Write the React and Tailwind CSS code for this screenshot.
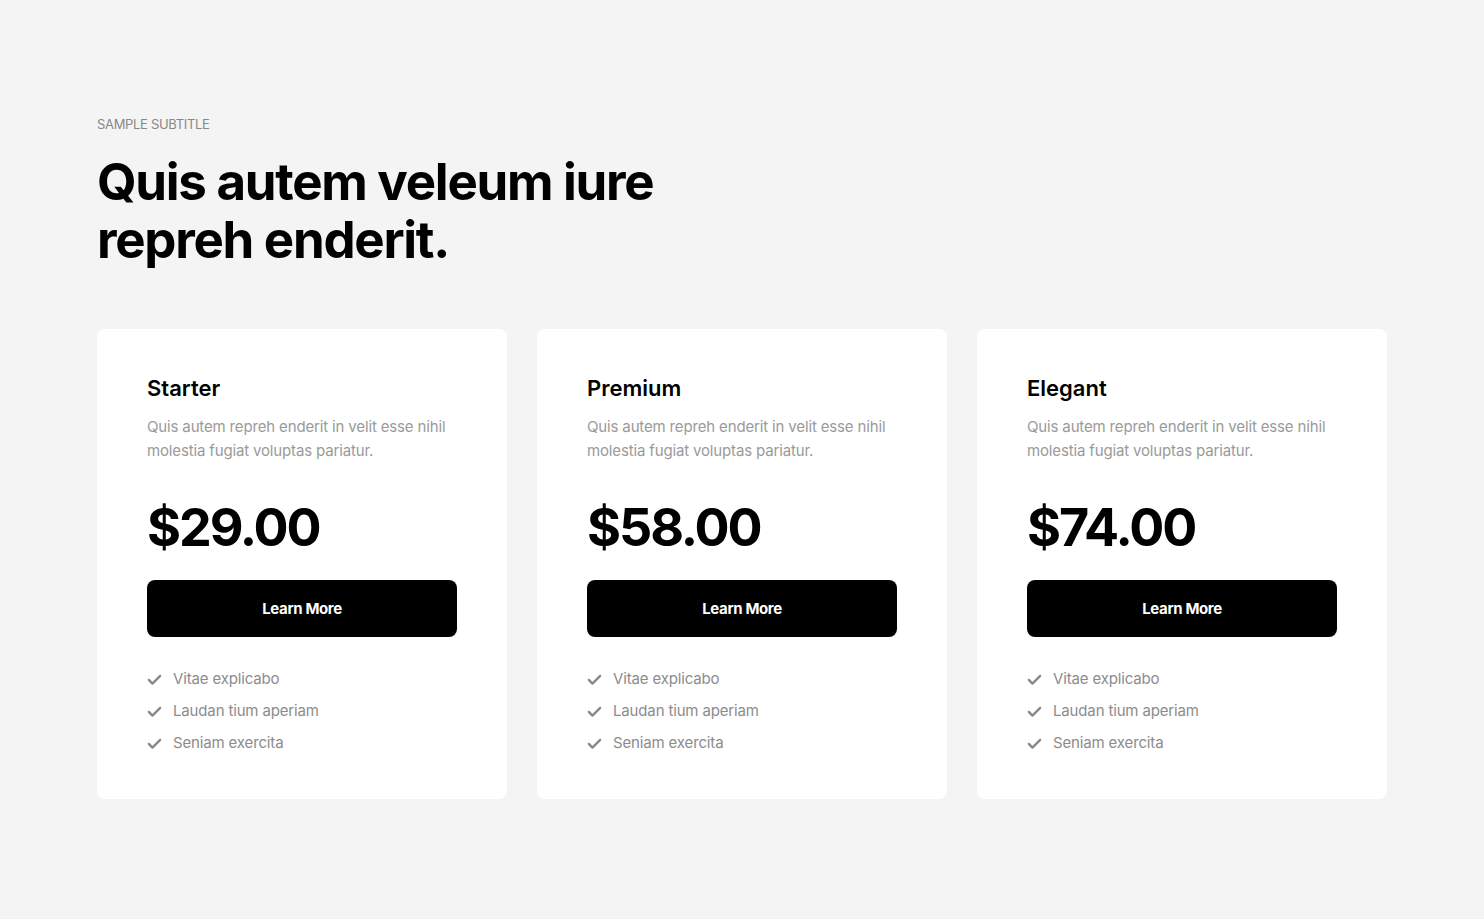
const plans = [
  { name: 'Starter', price: '$29.00' },
  { name: 'Premium', price: '$58.00' },
  { name: 'Elegant', price: '$74.00' },
];

const features = ['Vitae explicabo', 'Laudan tium aperiam', 'Seniam exercita'];

function Check() {
  return (
    <svg viewBox="0 0 16 16" className="w-[15px] h-[15px] shrink-0" fill="none">
      <path d="M2 8.5l3.8 3.8L14 4.2" stroke="#8a8a8a" strokeWidth="2.6" strokeLinecap="round" strokeLinejoin="round" />
    </svg>
  );
}

function PlanCard({ name, price }) {
  return (
    <div className="bg-white rounded-lg px-[50px] pt-[44px] pb-[44px]">
      <h3 className="text-[22px] leading-[30px] font-semibold text-black">{name}</h3>
      <p className="mt-[12px] text-[15px] leading-[24px] text-[#9a9a9a] tracking-[-0.01em]">
        Quis autem repreh enderit in velit esse nihil molestia fugiat voluptas pariatur.
      </p>
      <div className="mt-[39px] text-[52px] leading-none font-bold text-black tracking-[-0.04em]">{price}</div>
      <button type="button" className="mt-[26px] w-full h-[57px] bg-black rounded-lg text-white text-[15px] font-bold tracking-tight pt-px">
        Learn More
      </button>
      <ul className="mt-[30px] flex flex-col gap-2">
        {features.map((f) => (
          <li key={f} className="flex items-center gap-[11px] text-[15px] leading-[24px] text-[#8c8c8c] tracking-[-0.01em]">
            <Check />
            {f}
          </li>
        ))}
      </ul>
    </div>
  );
}

export default function App() {
  return (
    <div className="min-h-screen bg-[#f4f4f4] font-['Inter',sans-serif]">
      <div className="w-[1290px] ml-[97px] pt-[114px]">
        <p className="text-[13px] leading-[20px] uppercase text-[#888] tracking-tight">Sample Subtitle</p>
        <h1 className="mt-[19px] w-[620px] text-[51px] leading-[58px] font-bold text-black tracking-[-0.025em]">
          Quis autem veleum iure repreh enderit.
        </h1>
        <div className="mt-[60px] grid grid-cols-3 gap-[30px]">
          {plans.map((p) => (
            <PlanCard key={p.name} {...p} />
          ))}
        </div>
      </div>
    </div>
  );
}
